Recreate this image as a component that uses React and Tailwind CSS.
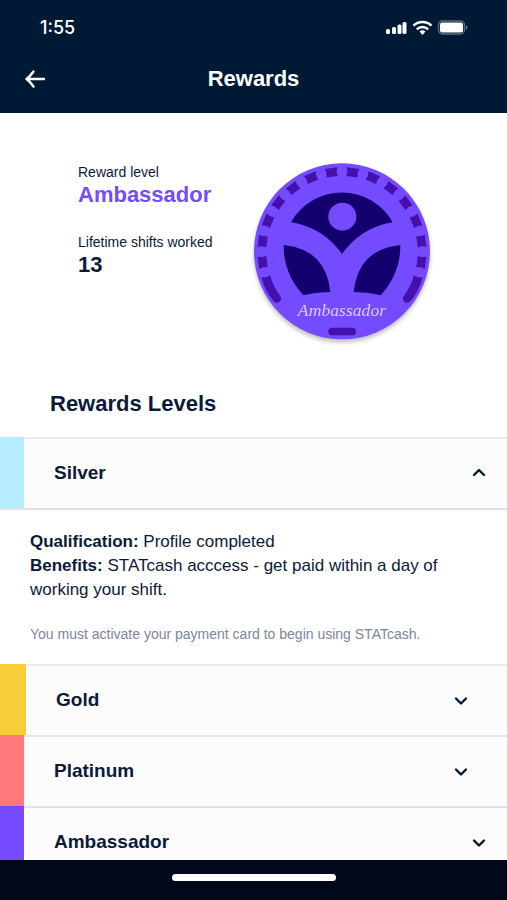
import React, { useState } from 'react';

const LEVELS = [
  {
    id: 'silver',
    name: 'Silver',
    swatch: 'w-6 bg-[#b5ecff]',
    row: 'border-[#ebecee] pr-5',
    qualification: 'Profile completed',
    benefits: 'STATcash acccess - get paid within a day of working your shift.',
    note: 'You must activate your payment card to begin using STATcash.'
  },
  { id: 'gold', name: 'Gold', swatch: 'w-[26px] bg-[#f9cd3a]', row: 'border-[#ebecee] pr-[38px]' },
  { id: 'platinum', name: 'Platinum', swatch: 'w-6 bg-[#ff797b]', row: 'border-[#e6e7ee] pr-[38px]' },
  { id: 'ambassador', name: 'Ambassador', swatch: 'w-6 bg-[#754bff]', row: 'border-[#dfdff0] pr-5' }
];

const NOTCH_ANGLES = [7.5, 22.5, 37.5, 52.5, 67.5, 82.5, 97.5];

const StatusIcons = () => (
  <svg className="h-4 w-[84px]" viewBox="0 0 84 16" fill="#fff" aria-hidden="true">
    <rect x="1" y="9" width="4" height="5" rx="1.5" />
    <rect x="7" y="7" width="4" height="7" rx="1.5" />
    <rect x="12.500" y="4.500" width="4" height="9.500" rx="1.5" />
    <rect x="17.500" y="2" width="4" height="12" rx="1.5" />
    <g fill="none" stroke="#fff" strokeWidth="2.5">
      <path d="M28.500 5.700a13 13 0 0 1 18 0" />
      <path d="M31.800 9.300a8.200 8.200 0 0 1 11.400 0" />
    </g>
    <path d="M34.500 11.600a4.500 4.500 0 0 1 6 0l-3 3.400z" />
    <rect x="53.500" y="1" width="26" height="13" rx="4" fill="none" stroke="#fff" strokeOpacity=".35" strokeWidth="1.5" />
    <rect x="55" y="2.500" width="23" height="10" rx="2" />
    <path d="M81 5.500c2 .6 2 3.400 0 4z" fillOpacity=".4" />
  </svg>
);

const Medal = () => (
  <svg
    className="size-[184px] shrink-0 overflow-visible drop-shadow-[0_3px_2px_rgba(0,0,0,0.25)]"
    viewBox="30 30 552 552"
    role="img"
    aria-label="Ambassador medal"
  >
    <circle cx="306" cy="304" r="264" fill="#754bff" />
    <g fill="#4510ab">
      {[...NOTCH_ANGLES, ...NOTCH_ANGLES.map((angle) => -angle)].map((angle) => (
        <path
          key={angle}
          d="M-19-13L19-13Q13 0 17 13L-17 13Q-13 0-19-13z"
          transform={`rotate(${angle} 306 305) translate(306 65)`}
        />
      ))}
      <path d="M64 382Q78 385 90 376Q99 408 120 437A12 12 0 0 1 101 454Q75 424 64 382z" />
      <path d="M548 382Q534 385 522 376Q513 408 492 437A12 12 0 0 0 511 454Q537 424 548 382z" />
      <rect x="265" y="533" width="83" height="23" rx="11" />
    </g>
    <g fill="#12006f">
      <path d="M153 217A175 175 0 0 1 458 217Q364 232 306 312Q248 232 153 217z" />
      <path d="M131 285Q258 298 271 426Q230 426 190 436Q130 370 131 285z" />
      <path d="M481 285Q354 298 341 426Q382 426 422 436Q482 370 481 285z" />
    </g>
    <circle cx="307" cy="200" r="42" fill="#754bff" />
    <text
      x="306"
      y="498"
      textAnchor="middle"
      fill="#dccbff"
      fontSize="53"
      className="font-['Liberation_Serif',serif] italic"
    >
      Ambassador
    </text>
  </svg>
);

const Chevron = ({ isOpen }) => (
  <svg
    className="h-4 w-4 shrink-0"
    viewBox="0 0 16 16"
    fill="none"
    stroke="#001a35"
    strokeWidth="2.4"
    strokeLinecap="round"
    strokeLinejoin="round"
    aria-hidden="true"
  >
    <path d={isOpen ? 'M3 9l5-5 5 5' : 'M3 5.500l5 5 5-5'} />
  </svg>
);

const Level = ({ level, isOpen, onToggle }) => (
  <li>
    <h3 className="flex h-[71px]">
      <span className={`shrink-0 ${level.swatch}`} />
      <button
        type="button"
        aria-expanded={isOpen}
        aria-controls={`${level.id}-details`}
        className={`flex flex-1 items-center justify-between border-t-2 bg-[#fcfcfd] pl-[30px] text-left text-[19px] font-semibold ${level.row}`}
        onClick={onToggle}
      >
        {level.name}
        <Chevron isOpen={isOpen} />
      </button>
    </h3>
    {isOpen && (
      <div id={`${level.id}-details`} className="border-t-2 border-[#dfe0ee] px-[30px] pt-5 pb-5">
        {level.qualification && (
          <p className="text-[17px] leading-6">
            <b>Qualification:</b> {level.qualification}
          </p>
        )}
        {level.benefits && (
          <p className="text-[17px] leading-6">
            <b>Benefits:</b> {level.benefits}
          </p>
        )}
        {level.note && <p className="mt-[22px] text-sm leading-5 text-[#7b8799]">{level.note}</p>}
      </div>
    )}
  </li>
);

const App = () => {
  const [openId, setOpenId] = useState('silver');

  return (
    <div className="flex h-screen flex-col bg-white font-['Liberation_Sans',Arial,sans-serif] text-[#0b1a38]">
      <header className="shrink-0 bg-[#001a35] text-white">
        <div className="flex h-14 items-center justify-between pr-[38px] pl-10">
          <span className="font-[Inter,sans-serif] text-lg font-medium">1:55</span>
          <StatusIcons />
        </div>
        <div className="grid h-[57px] grid-cols-[1fr_auto_1fr] items-center px-6 pb-3">
          <button type="button" aria-label="Back" className="justify-self-start">
            <svg
              className="h-5 w-[22px]"
              viewBox="0 0 22 20"
              fill="none"
              stroke="currentColor"
              strokeWidth="2.4"
              strokeLinecap="round"
              strokeLinejoin="round"
            >
              <path d="M20 10H2.500M9.500 2.500Q6 7.500 2.500 10Q6 12.500 9.500 17.500" />
            </svg>
          </button>
          <h1 className="text-[22px] font-bold">Rewards</h1>
        </div>
      </header>

      <main className="min-h-0 flex-1 overflow-y-auto [scrollbar-width:none]">
        <section className="flex justify-between pt-[47px] pr-[73px] pl-[78px]">
          <dl>
            <dt className="mt-1 text-sm leading-4">Reward level</dt>
            <dd className="text-[22px] leading-[30px] font-bold text-[#754bff]">Ambassador</dd>
            <dt className="mt-6 text-sm leading-4">Lifetime shifts worked</dt>
            <dd className="text-[22px] leading-[30px] font-bold">13</dd>
          </dl>
          <Medal />
        </section>

        <h2 className="mt-[45px] mb-[18px] pl-[50px] text-[22px] leading-[30px] font-bold">Rewards Levels</h2>
        <ul>
          {LEVELS.map((level) => (
            <Level
              key={level.id}
              level={level}
              isOpen={openId === level.id}
              onToggle={() => setOpenId(openId === level.id ? '' : level.id)}
            />
          ))}
        </ul>
      </main>

      <footer className="flex h-10 shrink-0 justify-center bg-[#000819] pt-[14px]">
        <span className="h-[7px] w-[164px] rounded-full bg-white" />
      </footer>
    </div>
  );
};

export default App;
